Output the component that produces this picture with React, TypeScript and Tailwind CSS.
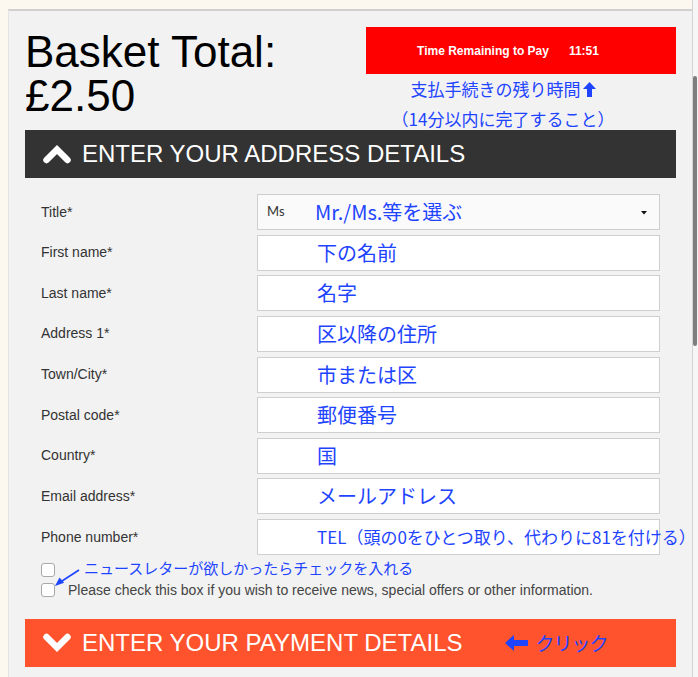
import React from "react";

const sans = "font-['Liberation_Sans',Arial,sans-serif]";
const jp = "font-['Noto_Sans_CJK_JP','Noto_Sans',sans-serif]";

function Chevron({ up }: { up: boolean }) {
  return (
    <svg width="30" height="20" viewBox="0 0 30 20" className="shrink-0">
      <polyline
        points={up ? "4.5,16 15,5.5 25.5,16" : "4.5,4 15,14.5 25.5,4"}
        fill="none"
        stroke="#fff"
        strokeWidth="6.5"
        strokeLinecap="round"
        strokeLinejoin="miter"
      />
    </svg>
  );
}

function UpArrow() {
  return (
    <svg width="13" height="15" viewBox="0 0 13 15" className="ml-[2px] inline-block">
      <path d="M6.5 0 L13 7 L9 7 L9 15 L4 15 L4 7 L0 7 Z" fill="#1e44ff" />
    </svg>
  );
}

function LeftArrow() {
  return (
    <svg width="23" height="16" viewBox="0 0 23 16" className="shrink-0">
      <path d="M0 8 L9 0 L9 5 L23 5 L23 11 L9 11 L9 16 Z" fill="#1e44ff" />
    </svg>
  );
}

type Row = { label: string; note: string; small?: boolean };

const rows: Row[] = [
  { label: "First name*", note: "下の名前" },
  { label: "Last name*", note: "名字" },
  { label: "Address 1*", note: "区以降の住所" },
  { label: "Town/City*", note: "市または区" },
  { label: "Postal code*", note: "郵便番号" },
  { label: "Country*", note: "国" },
  { label: "Email address*", note: "メールアドレス" },
  { label: "Phone number*", note: "TEL（頭の0をひとつ取り、代わりに81を付ける）", small: true },
];

function Checkbox() {
  return <div className="h-[14px] w-[14px] shrink-0 rounded-[3px] border border-[#a9a9a9] bg-white" />;
}

export default function App() {
  return (
    <div className="flex h-[677px] w-[698px] overflow-hidden bg-[#fcf8ef]">
      {/* page column */}
      <div className="flex w-[692px] shrink-0 flex-col pl-[8px] pt-[9px]">
        <div className="flex-1 border-l border-t-2 border-[#e4e4e4] border-t-[#d0d0d0] bg-[#f2f2f2] pl-[16px] pr-[16px]">
          {/* basket + timer */}
          <div className="flex h-[119px]">
            <div className={`flex-1 pt-[19px] text-[44px] leading-[43.5px] text-black ${sans}`}>
              Basket Total:
              <br />
              £2.50
            </div>
            <div className="w-[310px] shrink-0 pt-[16px]">
              <div className={`flex h-[47px] items-center justify-center bg-[#ff0000] pr-[26px] text-[12px] font-bold text-white ${sans}`}>
                <span>Time Remaining to Pay</span>
                <span className="ml-[20px]">11:51</span>
              </div>
              <div className={`pr-[36px] text-center text-[17px] leading-[30px] text-[#1e44ff] ${jp}`}>
                <div className="flex items-center justify-center whitespace-nowrap">
                  支払手続きの残り時間
                  <UpArrow />
                </div>
                <div className="whitespace-nowrap">（14分以内に完了すること）</div>
              </div>
            </div>
          </div>

          {/* address header */}
          <div className="flex h-[48px] items-center bg-[#333333] pl-[17px]">
            <Chevron up />
            <span className={`ml-[10px] text-[24px] text-white ${sans}`}>ENTER YOUR ADDRESS DETAILS</span>
          </div>

          {/* form */}
          <div className="mt-[16px] flex flex-col gap-[4.625px] px-[16px]">
            <div className="flex h-[36px] items-center">
              <div className={`w-[216px] shrink-0 text-[14px] text-[#333] ${sans}`}>Title*</div>
              <div className="relative flex h-[36px] min-w-0 flex-1 items-center border border-[#cfcfcf] bg-[#fafafa] pl-[9px]">
                <span className="w-[48px] font-['Lato',sans-serif] text-[13px] text-[#333]">Ms</span>
                <span className={`text-[20px] text-[#1e44ff] ${jp}`}>Mr./Ms.等を選ぶ</span>
                <svg width="6" height="4" viewBox="0 0 6 4" className="absolute right-[12px] top-[16px]">
                  <path d="M0 0 L6 0 L3 3.5 Z" fill="#111" />
                </svg>
              </div>
            </div>
            {rows.map((r) => (
              <div key={r.label} className="flex h-[36px] items-center">
                <div className={`w-[216px] shrink-0 text-[14px] text-[#333] ${sans}`}>{r.label}</div>
                <div className="flex h-[36px] min-w-0 flex-1 items-center border border-[#cfcfcf] bg-white pl-[59px]">
                  <span className={`shrink-0 whitespace-nowrap text-[#1e44ff] ${jp} ${r.small ? "text-[17px]" : "text-[20px]"}`}>
                    {r.note}
                  </span>
                </div>
              </div>
            ))}
          </div>

          {/* newsletter */}
          <div className="relative mt-[8px] pl-[16px]">
            <div className="flex h-[14px] items-center">
              <Checkbox />
              <span className={`ml-[29px] -mt-[3px] whitespace-nowrap text-[15px] text-[#1e44ff] ${jp}`}>
                ニュースレターが欲しかったらチェックを入れる
              </span>
            </div>
            <div className="mt-[6px] flex h-[14px] items-center">
              <Checkbox />
              <span className={`ml-[13px] mt-[1px] whitespace-nowrap text-[14px] text-[#444] ${sans}`}>
                Please check this box if you wish to receive news, special offers or other information.
              </span>
            </div>
            <svg width="28" height="20" viewBox="0 0 28 20" className="absolute left-[29px] top-[5px]">
              <line x1="25" y1="2" x2="8" y2="13" stroke="#1e44ff" strokeWidth="1.6" />
              <path d="M1 18 L5.5 9.4 L10.1 14.8 Z" fill="#1e44ff" />
            </svg>
          </div>

          {/* payment header */}
          <div className="mt-[22px] flex h-[48px] items-center bg-[#ff532d] pl-[17px]">
            <Chevron up={false} />
            <span className={`ml-[10px] text-[24px] text-white ${sans}`}>ENTER YOUR PAYMENT DETAILS</span>
            <span className="ml-[42px] flex items-center">
              <LeftArrow />
              <span className={`ml-[8px] text-[19px] tracking-[-1px] text-[#1e44ff] ${jp}`}>クリック</span>
            </span>
          </div>
        </div>
      </div>

      {/* scrollbar */}
      <div className="w-[6px] border-l border-[#d4d4d4] bg-[#f6f6f6] pt-[76px]">
        <div className="h-[270px] w-[4px] rounded-full bg-[#7d7d7d]" />
      </div>
    </div>
  );
}
